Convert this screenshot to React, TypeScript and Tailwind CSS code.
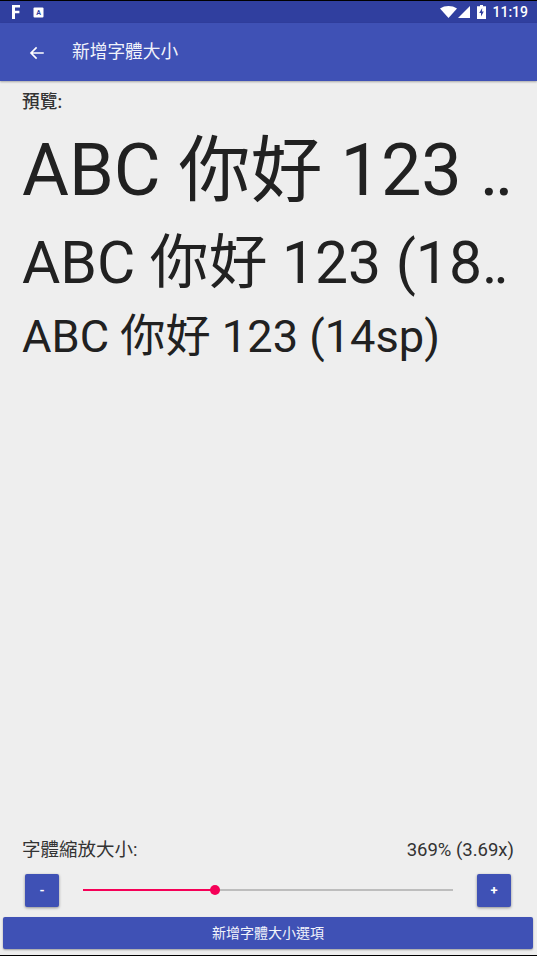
import React from 'react';

const fontStack = { fontFamily: 'Roboto, "Noto Sans CJK TC", sans-serif' };

function StatusBar() {
  return (
    <div className="flex h-[22px] items-center justify-between bg-[#303f9f] pl-[12px] pr-[9px] text-white">
      <div className="flex items-center gap-[13px]">
        <svg width="8" height="14" viewBox="0 0 8 14">
          <path d="M0 0H8V2.6H3V5.8H7.4V8.3H3V14H0Z" fill="#fff" />
        </svg>
        <svg width="11" height="11" viewBox="0 0 11 11">
          <rect x="0.5" y="0.5" width="10" height="10" rx="1" fill="#fff" />
          <text x="5.5" y="8" fontSize="7" fontWeight="700" textAnchor="middle" fill="#303f9f">A</text>
        </svg>
      </div>
      <div className="flex items-center">
        <svg width="17" height="12" viewBox="0 0 17 12" className="mr-[1px]">
          <path d="M0 2.5C5 -0.8 12 -0.8 17 2.5L8.5 12Z" fill="#fff" />
        </svg>
        <svg width="12" height="12" viewBox="0 0 12 12" className="mr-[7px]">
          <path d="M12 0V12H0Z" fill="#fff" />
        </svg>
        <svg width="9" height="14" viewBox="0 0 9 14" className="mr-[6px]">
          <path d="M3 0H6V1.2H9V14H0V1.2H3Z" fill="#fff" />
          <path d="M5.2 3L2.2 8H4V11.5L6.8 6.4H5Z" fill="#303f9f" />
        </svg>
        <span className="text-[14px] font-medium leading-none">11:19</span>
      </div>
    </div>
  );
}

function PreviewLine({ text, size, dots }: { text: string; size: string; dots?: string }) {
  return (
    <div className={`whitespace-nowrap text-[#212121] ${size}`}>
      {text}
      {dots && <span className={dots}>..</span>}
    </div>
  );
}

function SquareButton({ label }: { label: string }) {
  return (
    <button className="flex h-[33px] w-[34px] items-center justify-center rounded-[2px] bg-[#3f51b5] text-[13px] font-bold text-white shadow-[0_1px_3px_rgba(0,0,0,0.4)]">
      {label}
    </button>
  );
}

export default function App() {
  return (
    <div className="flex h-[956px] w-[537px] flex-col overflow-hidden border-t border-b border-black bg-[#eeeeee]" style={fontStack}>
      <StatusBar />
      <div className="flex h-[58px] shrink-0 items-center bg-[#3f51b5] pl-[28px] pt-[1px] text-white shadow-[0_1px_2px_rgba(0,0,0,0.3)]">
        <svg width="18" height="18" viewBox="0 0 24 24" fill="none" stroke="#fff" strokeWidth="2.2">
          <path d="M21 12H4M11.5 4.5L4 12l7.5 7.5" />
        </svg>
        <span className="ml-[26px] text-[17.7px] leading-none text-[#f1f3fb]">新增字體大小</span>
      </div>
      <div className="flex flex-1 flex-col pl-[22px] pr-[26px]">
        <div className="mt-[10px] text-[17.7px] font-medium leading-[22px] text-[#333333]">預覽:</div>
        <div className="mt-[9px]">
          <PreviewLine text="ABC 你好 123 " dots="tracking-[-4px]" size="text-[72px] leading-[98px]" />
          <PreviewLine text="ABC 你好 123 (18" dots="tracking-[-4px]" size="text-[58.8px] leading-[86px]" />
          <PreviewLine text="ABC 你好 123 (14sp)" size="text-[45.2px] leading-[62px]" />
        </div>
        <div className="mt-auto mb-[12px] mr-[-3px] flex items-center justify-between text-[18.5px] leading-[24px] text-[#333333]">
          <span>字體縮放大小:</span>
          <span>369% (3.69x)</span>
        </div>
      </div>
      <div className="flex items-center pl-[25px] pr-[26px]">
        <SquareButton label="-" />
        <div className="relative mx-[24px] mb-[1px] h-[2px] flex-1 bg-[#bdbdbd]">
          <div className="h-[2px] w-[132px] bg-[#f50057]" />
          <div className="absolute left-[127px] top-[-4px] h-[10px] w-[10px] rounded-full bg-[#f50057]" />
        </div>
        <SquareButton label="+" />
      </div>
      <div className="mt-[10px] mb-[6px] pl-[3px] pr-[4px]">
        <button className="flex h-[32px] w-full items-center justify-center rounded-[2px] bg-[#3f51b5] text-[14px] text-[#f1f3fb] shadow-[0_1px_2px_rgba(0,0,0,0.35)]">新增字體大小選項</button>
      </div>
    </div>
  );
}
